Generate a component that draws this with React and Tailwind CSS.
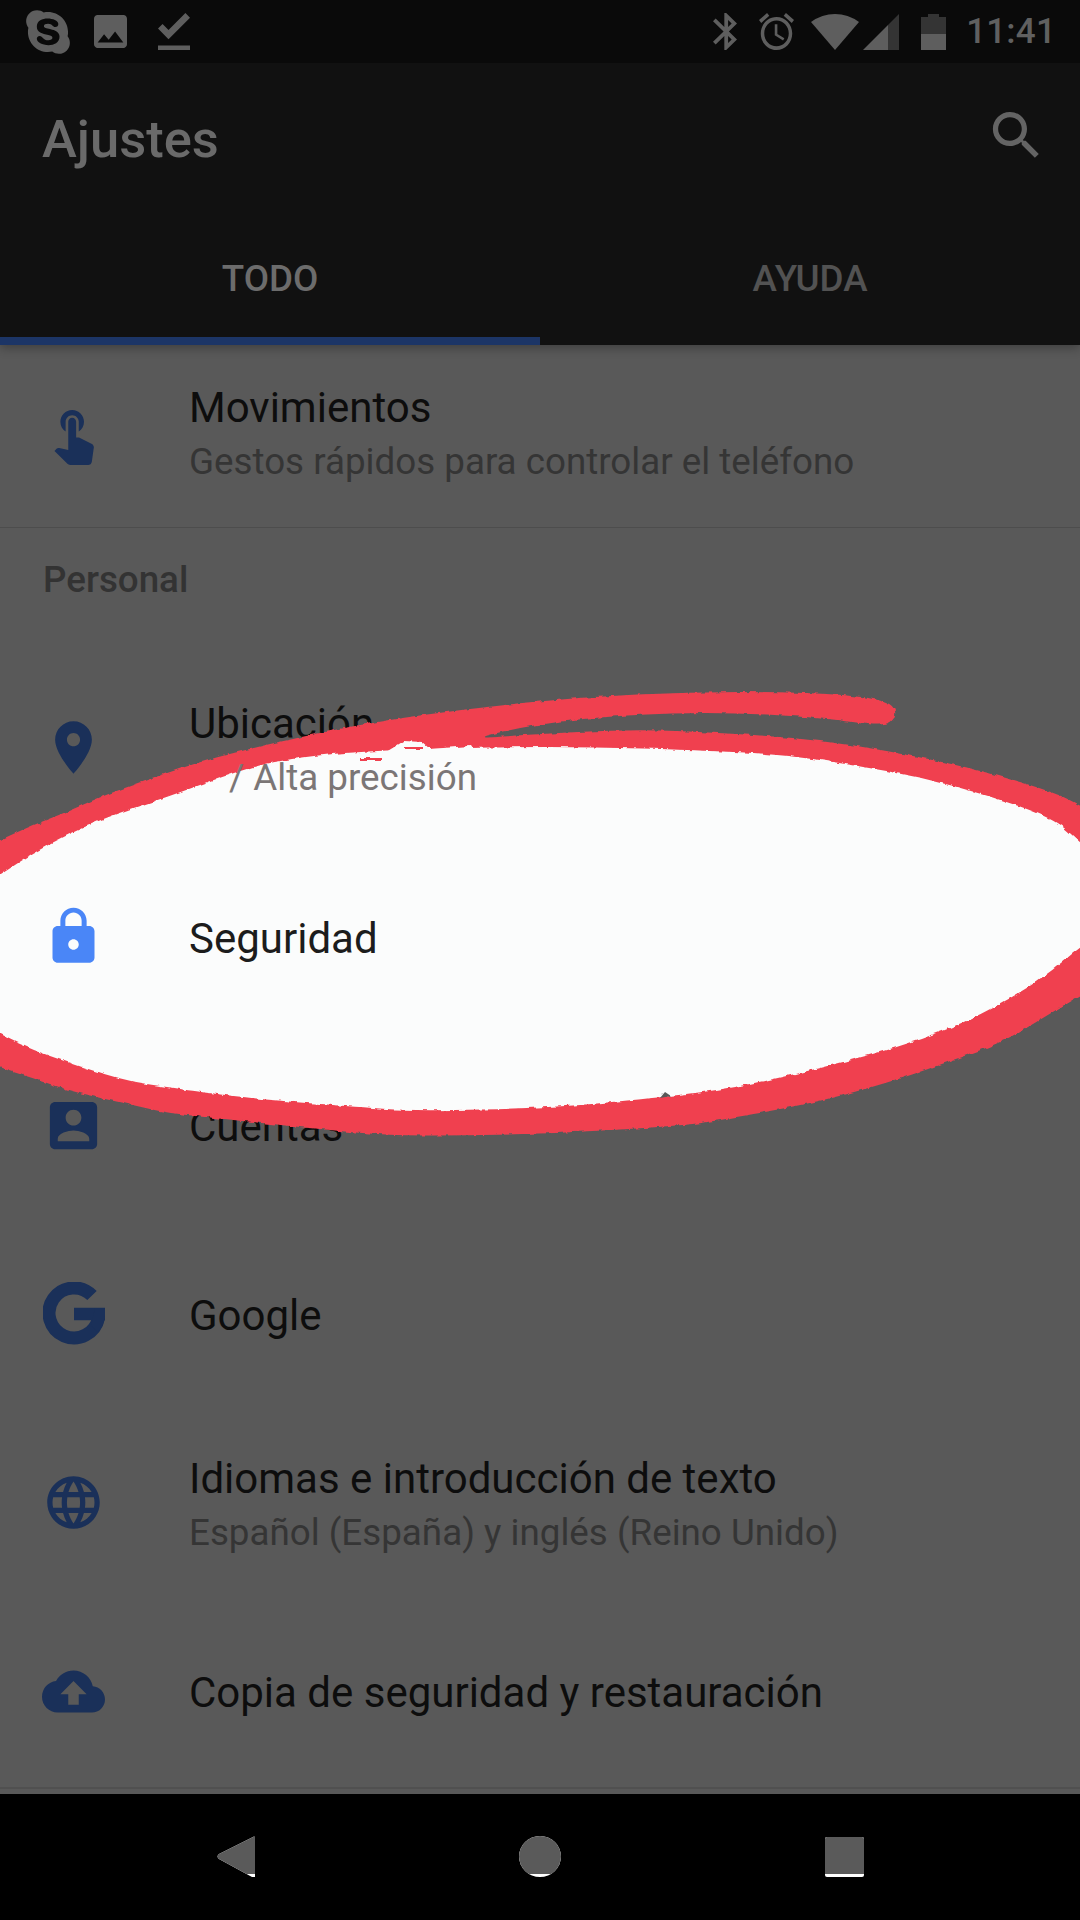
import { FaSkype } from 'react-icons/fa'

const ICONS = {
  touch: 'M9 11.24V7.5C9 6.12 10.12 5 11.5 5S14 6.12 14 7.5v3.74c1.21-.81 2-2.18 2-3.74C16 5.01 13.99 3 11.5 3S7 5.01 7 7.5c0 1.56.79 2.93 2 3.74zm9.84 4.63l-4.54-2.26c-.17-.07-.35-.11-.54-.11H13v-6c0-.83-.67-1.5-1.5-1.5S10 6.67 10 7.5v10.74l-3.43-.72c-.08-.01-.15-.03-.24-.03-.31 0-.59.13-.79.33l-.79.8 4.94 4.94c.27.27.65.44 1.06.44h6.79c.75 0 1.33-.55 1.44-1.28l.75-5.27c.01-.07.02-.14.02-.2 0-.62-.38-1.16-.91-1.38z',
  pin: 'M12 2C8.13 2 5 5.13 5 9c0 5.25 7 13 7 13s7-7.75 7-13c0-3.87-3.13-7-7-7zm0 9.5c-1.38 0-2.5-1.12-2.5-2.5s1.12-2.5 2.5-2.5 2.5 1.12 2.5 2.5-1.12 2.5-2.5 2.5z',
  lock: 'M18 8h-1V6c0-2.76-2.24-5-5-5S7 3.24 7 6v2H6c-1.1 0-2 .9-2 2v10c0 1.1.9 2 2 2h12c1.1 0 2-.9 2-2V10c0-1.1-.9-2-2-2zm-6 9c-1.1 0-2-.9-2-2s.9-2 2-2 2 .9 2 2-.9 2-2 2zm3.1-9H8.9V6c0-1.71 1.39-3.1 3.1-3.1 1.71 0 3.1 1.39 3.1 3.1v2z',
  account: 'M3 5v14c0 1.1.89 2 2 2h14c1.1 0 2-.9 2-2V5c0-1.1-.9-2-2-2H5c-1.11 0-2 .9-2 2zm12 4c0 1.66-1.34 3-3 3s-3-1.34-3-3 1.34-3 3-3 3 1.34 3 3zm-9 8c0-2 4-3.1 6-3.1s6 1.1 6 3.1v1H6v-1z',
  globe: 'M11.99 2C6.47 2 2 6.48 2 12s4.47 10 9.99 10C17.52 22 22 17.52 22 12S17.52 2 11.99 2zm6.93 6h-2.95c-.32-1.25-.78-2.45-1.38-3.56 1.84.63 3.37 1.91 4.33 3.56zM12 4.04c.83 1.2 1.48 2.53 1.91 3.96h-3.82c.43-1.43 1.08-2.76 1.91-3.96zM4.26 14C4.1 13.36 4 12.69 4 12s.1-1.36.26-2h3.38c-.08.66-.14 1.32-.14 2 0 .68.06 1.34.14 2H4.26zm.82 2h2.95c.32 1.25.78 2.45 1.38 3.56-1.84-.63-3.37-1.9-4.33-3.56zm2.95-8H5.08c.96-1.66 2.49-2.93 4.33-3.56C8.81 5.55 8.35 6.75 8.03 8zM12 19.96c-.83-1.2-1.48-2.53-1.91-3.96h3.82c-.43 1.43-1.08 2.76-1.91 3.96zM14.34 14H9.66c-.09-.66-.16-1.32-.16-2 0-.68.07-1.35.16-2h4.68c.09.65.16 1.32.16 2 0 .68-.07 1.34-.16 2zm.25 5.56c.6-1.11 1.06-2.31 1.38-3.56h2.95c-.96 1.65-2.49 2.93-4.33 3.56zM16.36 14c.08-.66.14-1.32.14-2 0-.68-.06-1.34-.14-2h3.38c.16.64.26 1.31.26 2s-.1 1.36-.26 2h-3.38z',
  cloud: 'M19.35 10.04C18.67 6.59 15.64 4 12 4 9.11 4 6.6 5.64 5.35 8.04 2.34 8.36 0 10.91 0 14c0 3.31 2.69 6 6 6h13c2.76 0 5-2.24 5-5 0-2.64-2.05-4.78-4.65-4.96zM14 13v4h-4v-4H7l5-5 5 5h-3z',
}

const RED_OUTLINE = [
  [-30, 855], [0, 840], [33, 825], [67, 812], [100, 797], [133, 785], [167, 773], [200, 762], [233, 753], [287, 740],
  [372, 722], [482, 707], [585, 697], [689, 692], [792, 692], [860, 696], [892, 703], [897, 716], [885, 727],
  [826, 718], [723, 712], [620, 715], [537, 724], [470, 739], [523, 735], [634, 729], [720, 733], [787, 737],
  [853, 745], [920, 757], [987, 772], [1053, 792], [1080, 805], [1120, 830],
  [1120, 975], [1080, 995], [1053, 1012], [1003, 1042], [953, 1060], [903, 1078], [837, 1097], [787, 1108],
  [720, 1120], [689, 1125], [551, 1134], [413, 1136], [360, 1133], [300, 1127], [233, 1120], [167, 1113],
  [133, 1105], [100, 1098], [67, 1090], [33, 1078], [0, 1068], [-30, 1055],
]

const WHITE_OUTLINE = [
  [-30, 895], [0, 875], [33, 853], [67, 835], [100, 820], [133, 808], [167, 797], [200, 785], [233, 773], [267, 763],
  [317, 755], [360, 752], [413, 749], [565, 746], [720, 751], [787, 755], [853, 765], [920, 777], [987, 795],
  [1053, 818], [1080, 842], [1120, 880],
  [1120, 920], [1080, 947], [1053, 970], [1020, 993], [970, 1020], [920, 1040], [870, 1055], [820, 1068],
  [770, 1080], [720, 1090], [654, 1098], [551, 1108], [413, 1111], [360, 1107], [267, 1100], [200, 1092],
  [167, 1087], [133, 1082], [100, 1073], [67, 1062], [33, 1050], [0, 1035], [-30, 1015],
]

// rounds a list of points off with quadratic curves through the midpoints
function smooth(points) {
  const mid = (a, b) => [(a[0] + b[0]) / 2, (a[1] + b[1]) / 2]
  const start = mid(points[points.length - 1], points[0])
  let d = `M${start[0]} ${start[1]}`
  points.forEach((p, i) => {
    const m = mid(p, points[(i + 1) % points.length])
    d += `Q${p[0]} ${p[1]} ${m[0]} ${m[1]}`
  })
  return d + 'Z'
}

function Icon({ d, className }) {
  return (
    <svg viewBox="0 0 24 24" className={className} fill="currentColor">
      <path d={d} />
    </svg>
  )
}

function GoogleIcon() {
  return (
    <svg viewBox="0 0 62 63" className="w-[62px] h-[63px] text-[#1a3059]" fill="none" stroke="currentColor">
      <path d="M49 13.6A25 25 0 1 0 55.5 36" strokeWidth="13" />
      <path d="M31 32H62" strokeWidth="12.5" />
      <path d="M52 26H62V34Q61 44 55 50L48 44Z" fill="currentColor" stroke="none" />
    </svg>
  )
}

function SettingRow({ icon, title, subtitle, iconClass = 'text-[#1a3059]', titleClass = 'text-[#0d0d0d]', raised }) {
  return (
    <div className={`flex h-[188.7px] items-center ${raised ? 'relative z-20' : ''}`}>
      <div className="w-[189px] pl-[42px] pb-[3px] flex-none">
        <div className="w-[63px] flex justify-center">
          {typeof icon === 'string' ? <Icon d={ICONS[icon]} className={`w-[63px] h-[63px] ${iconClass}`} /> : icon}
        </div>
      </div>
      <div className={subtitle ? 'pt-[3px]' : 'pt-[1px]'}>
        <div className={`text-[42px] leading-[54px] ${titleClass}`}>{title}</div>
        {subtitle && <div className="text-[36.75px] leading-[54px] text-[#353535]">{subtitle}</div>}
      </div>
    </div>
  )
}

function StatusBar() {
  return (
    <div className="h-[63px] bg-[#0a0a0a] flex items-center justify-between pl-[23px] pr-[24px] text-[#5e5e5e]">
      <div className="flex items-center">
        <FaSkype className="w-[50px] h-[50px]" />
        <svg viewBox="3 3 18 18" className="w-[33px] h-[33px] ml-[21px]" fill="currentColor">
          <path d="M21 19V5c0-1.1-.9-2-2-2H5c-1.1 0-2 .9-2 2v14c0 1.1.9 2 2 2h14c1.1 0 2-.9 2-2zM8.5 13.5l2.5 3.01L14.5 12l4.5 6H5l3.5-4.5z" />
        </svg>
        <svg viewBox="5 4 14 16" className="w-[32px] h-[37px] ml-[31px]" fill="currentColor" preserveAspectRatio="none">
          <path d="M5 18h14v2H5v-2zm4.6-2.7L5 10.7l2-1.9 2.6 2.6L17 4l2 2-9.4 9.3z" />
        </svg>
      </div>
      <div className="flex items-center">
        <svg viewBox="5 2 12.71 20" className="w-[24px] h-[37px]" fill="currentColor" preserveAspectRatio="none">
          <path d="M17.71 7.71L12 2h-1v7.59L6.41 5 5 6.41 10.59 12 5 17.59 6.41 19 11 14.41V22h1l5.71-5.71-4.3-4.29 4.3-4.29zM13 5.83l1.88 1.88L13 9.59V5.83zm1.88 10.46L13 18.17v-3.76l1.88 1.88z" />
        </svg>
        <svg viewBox="2 1.86 20 20.14" className="w-[35px] h-[37px] ml-[22px]" fill="currentColor" preserveAspectRatio="none">
          <path d="M22 5.72l-4.6-3.86-1.29 1.53 4.6 3.86L22 5.72zM7.88 3.39L6.6 1.86 2 5.71l1.29 1.53 4.59-3.85zM12.5 8H11v6l4.75 2.85.75-1.23-4-2.37V8zM12 4c-4.97 0-9 4.03-9 9s4.03 9 9 9 9-4.03 9-9-4.03-9-9-9zm0 16c-3.87 0-7-3.13-7-7s3.13-7 7-7 7 3.13 7 7-3.13 7-7 7z" />
        </svg>
        <svg viewBox="0 0 48 36" className="w-[48px] h-[36px] ml-[17px]" fill="currentColor">
          <path d="M24 36L0 8Q11 0 24 0T48 8Z" />
        </svg>
        <svg viewBox="0 0 36 36" className="w-[36px] h-[36px] ml-[4px]" fill="currentColor">
          <path d="M25 11L36 0V36H25Z" fill="#343434" />
          <path d="M0 36L25 11V36Z" />
        </svg>
        <svg viewBox="0 0 25 36" className="w-[25px] h-[36px] ml-[22px]" fill="currentColor">
          <path d="M7 0H18V3H25V20H0V3H7Z" fill="#343434" />
          <path d="M0 20H25V36H0Z" />
        </svg>
        <span className="ml-[20px] text-[35px] font-medium leading-none tracking-[0.2px] text-[#606060]">11:41</span>
      </div>
    </div>
  )
}

function AppBar() {
  return (
    <header className="relative bg-[#111111] shadow-[0_3px_10px_rgba(0,0,0,0.3)]">
      <StatusBar />
      <div className="h-[147px] flex items-center justify-between pl-[42px] pr-[32px]">
        <h1 className="text-[52.5px] font-medium text-[#6a6a6a] leading-none pt-[6px]">Ajustes</h1>
        <svg viewBox="0 0 24 24" className="w-[63px] h-[63px] text-[#646464] -mt-[3px]" fill="currentColor">
          <path d="M15.5 14h-.79l-.28-.27C15.41 12.59 16 11.11 16 9.5 16 5.91 13.09 3 9.5 3S3 5.91 3 9.5 5.91 16 9.5 16c1.61 0 3.09-.59 4.23-1.57l.27.28v.79l5 4.99L20.49 19l-4.99-5zm-6 0C7.01 14 5 11.99 5 9.5S7.01 5 9.5 5 14 7.01 14 9.5 11.99 14 9.5 14z" />
        </svg>
      </div>
      <div className="flex h-[135px] text-[36.75px] font-medium">
        <div className="flex-1 flex items-center justify-center pt-[10px] border-b-[8px] border-[#1c3566] text-[#6c6c6c]">TODO</div>
        <div className="flex-1 flex items-center justify-center pt-[10px] border-b-[8px] border-transparent text-[#525252]">AYUDA</div>
      </div>
    </header>
  )
}

function NavButton({ id, className, children }) {
  return (
    <svg viewBox="0 0 42 41" className={className}>
      <clipPath id={id}>
        <rect x="0" y="0" width="42" height="38" />
      </clipPath>
      <g fill="#ffffff">{children}</g>
      <g fill="#5a5a5a" clipPath={`url(#${id})`}>{children}</g>
    </svg>
  )
}

function NavBar() {
  return (
    <nav className="h-[126px] flex-none bg-black flex items-start pt-[42px]">
      <NavButton id="nav-back" className="w-[42px] h-[41px] ml-[216px]">
        <path d="M39 1Q38 0 37 1L3 18Q0 20.5 3 23L36 41H39Z" />
      </NavButton>
      <NavButton id="nav-home" className="w-[42px] h-[41px] ml-[261px]">
        <ellipse cx="21" cy="20.5" rx="21" ry="20.5" />
      </NavButton>
      <NavButton id="nav-recents" className="w-[42px] h-[41px] ml-[263px]">
        <rect x="1" y="1" width="39" height="40" rx="2" />
      </NavButton>
    </nav>
  )
}

function Highlight() {
  return (
    <svg viewBox="0 0 1080 1920" className="absolute inset-0 w-[1080px] h-[1920px] z-10 pointer-events-none">
      <filter id="brush" x="-5%" y="-5%" width="110%" height="110%">
        <feTurbulence type="fractalNoise" baseFrequency="0.14" numOctaves="2" seed="4" />
        <feDisplacementMap in="SourceGraphic" scale="4" xChannelSelector="R" yChannelSelector="G" />
      </filter>
      <g filter="url(#brush)">
        <path d={smooth(RED_OUTLINE)} fill="#f04050" />
        <path d={smooth(WHITE_OUTLINE)} fill="#fbfcfc" />
        <path d="M386 752L404 741L422 742L430 749L470 746L474 752Z" fill="#fbfcfc" />
        <path d="M360 758H382V761H360ZM404 747H424V749H404Z" fill="#f04050" />
        <path d="M660 1098L665 1092L671 1096Z" fill="#595959" />
      </g>
    </svg>
  )
}

export default function App() {
  return (
    <div className="relative w-[1080px] h-[1920px] overflow-hidden flex flex-col bg-[#595959] font-['Roboto',sans-serif]">
      <AppBar />
      <main className="flex-1">
        <div className="h-[183px] flex items-center pb-[2px] border-b border-[#4d4d4d]">
          <div className="w-[189px] pl-[42px] pb-[3px] flex-none">
            <Icon d={ICONS.touch} className="w-[63px] h-[63px] text-[#1a3059]" />
          </div>
          <div>
            <div className="text-[42px] leading-[54px] text-[#0d0d0d]">Movimientos</div>
            <div className="text-[36.75px] leading-[54px] text-[#353535]">Gestos rápidos para controlar el teléfono</div>
          </div>
        </div>
        <div className="h-[127px] pl-[43px] pt-[28px] text-[36.75px] font-medium leading-[48px] text-[#333333]">Personal</div>
        <SettingRow
          icon="pin"
          title="Ubicación"
          subtitle={<>Sí<span className="relative z-20 text-[#7b7676]"> / Alta precisión</span></>}
        />
        <SettingRow icon="lock" title="Seguridad" iconClass="text-[#4a86f7]" titleClass="text-[#1c1c1c]" raised />
        <SettingRow icon="account" title="Cuentas" />
        <SettingRow icon={<GoogleIcon />} title="Google" />
        <SettingRow icon="globe" title="Idiomas e introducción de texto" subtitle="Español (España) y inglés (Reino Unido)" />
        <SettingRow icon="cloud" title="Copia de seguridad y restauración" />
        <div className="border-b-2 border-[#505050]" />
      </main>
      <NavBar />
      <Highlight />
    </div>
  )
}
